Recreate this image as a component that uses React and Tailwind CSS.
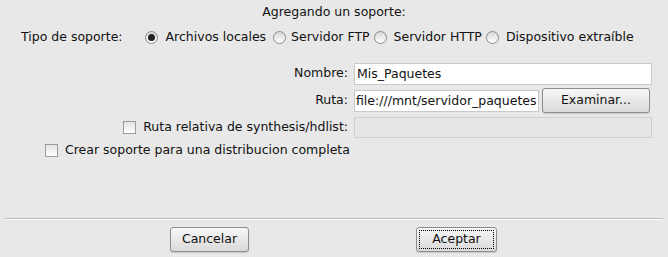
import React from "react";

const Radio = ({ checked }) => (
    <span className="w-[13px] h-[13px] rounded-full border border-[#8a8a8a] bg-gradient-to-b from-[#d8d8d8] to-[#ffffff] flex items-center justify-center shrink-0">
        {checked && <span className="w-[7px] h-[7px] rounded-full bg-[#222]" />}
    </span>
);

const Check = () => (
    <span className="w-[13px] h-[13px] border border-[#9a9a9a] bg-gradient-to-b from-[#e4e4e4] to-white shrink-0" />
);

const Btn = ({ children, focus, className = "" }) => (
    <button className={`h-[25px] rounded-[3px] border border-[#8e8e8e] bg-gradient-to-b from-[#f7f7f7] to-[#dadada] shadow-[0_1px_1px_rgba(0,0,0,0.15)] p-[2px] ${className}`}>
        <span className={`w-full h-full flex items-center justify-center ${focus ? "border border-dotted border-black" : ""}`}>
            {children}
        </span>
    </button>
);

export default function App() {
    return (
        <div className="w-[668px] h-[257px] bg-[#e8e8e8] text-[#111] text-[12.5px] flex flex-col" style={{ fontFamily: '"DejaVu Sans", sans-serif' }}>
            <div className="h-[24px] pt-[3px] text-center leading-[18px]">Agregando un soporte:</div>

            {/* tipo de soporte */}
            <div className="h-[26px] flex items-center pl-[21px]">
                <span className="mr-[22px]">Tipo de soporte:</span>
                <span className="flex items-center gap-[8px] mr-[7px]"><Radio checked />Archivos locales</span>
                <span className="flex items-center gap-[5px] mr-[4px]"><Radio />Servidor FTP</span>
                <span className="flex items-center gap-[7px] mr-[4px]"><Radio />Servidor HTTP</span>
                <span className="flex items-center gap-[7px]"><Radio />Dispositivo extraíble</span>
            </div>

            {/* campos */}
            <div className="mt-[12px] flex flex-col gap-[4px] pr-[16px]">
                <div className="flex items-center h-[23px]">
                    <span className="w-[349px] text-right pr-[1px]">Nombre:</span>
                    <input readOnly value="Mis_Paquetes" className="ml-[5px] flex-1 h-[22px] bg-white border border-[#c9c9c9] px-[2px] outline-none text-[12.5px]" />
                </div>
                <div className="flex items-center h-[23px]">
                    <span className="w-[349px] text-right pr-[1px]">Ruta:</span>
                    <input readOnly value="file:///mnt/servidor_paquetes" className="ml-[5px] w-[185px] h-[22px] bg-white border border-[#c9c9c9] px-[1px] outline-none text-[12.5px]" />
                    <Btn className="ml-[3px] w-[108px] h-[24px]">Examinar...</Btn>
                </div>
                <div className="flex items-center h-[22px]">
                    <span className="w-[349px] flex items-center justify-end pr-[1px]">
                        <Check />
                        <span className="ml-[7px]">Ruta relativa de synthesis/hdlist:</span>
                    </span>
                    <span className="ml-[5px] flex-1 h-[21px] border border-[#cfcfcf] bg-[#e6e6e6]" />
                </div>
            </div>

            <div className="mt-[5px] h-[14px] flex items-center pl-[45px]">
                <Check />
                <span className="ml-[7px]">Crear soporte para una distribucion completa</span>
            </div>

            <div className="mt-[61px] mx-[5px] border-t border-[#b8b8b8] border-b border-b-white" />

            <div className="mt-[7px] flex">
                <Btn className="ml-[170px] w-[79px]">Cancelar</Btn>
                <Btn focus className="ml-[167px] w-[81px]">Aceptar</Btn>
            </div>
        </div>
    );
}
